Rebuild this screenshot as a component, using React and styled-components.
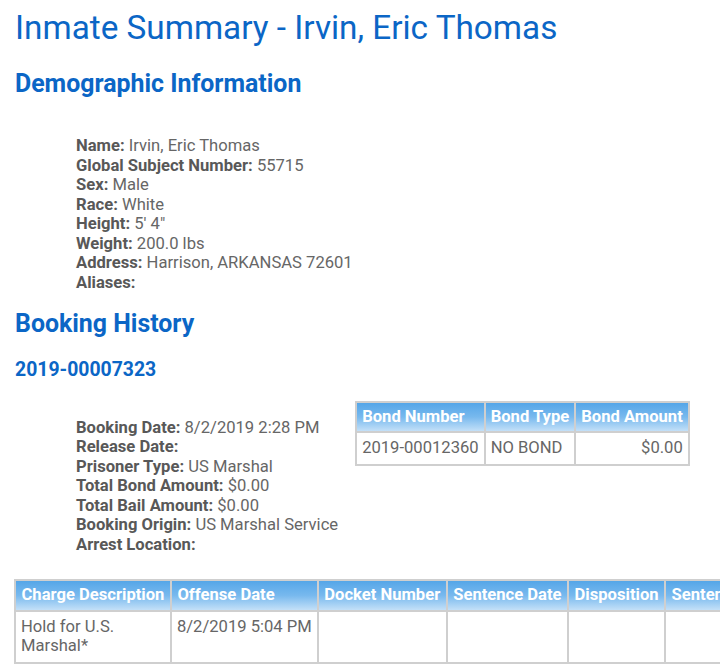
import React from 'react'
import styled, { createGlobalStyle } from 'styled-components'

const demographics = [
  ['Name', 'Irvin, Eric Thomas'],
  ['Global Subject Number', '55715'],
  ['Sex', 'Male'],
  ['Race', 'White'],
  ['Height', '5\' 4"'],
  ['Weight', '200.0 lbs'],
  ['Address', 'Harrison, ARKANSAS 72601'],
  ['Aliases', '']
]

const booking = {
  number: '2019-00007323',
  details: [
    ['Booking Date', '8/2/2019 2:28 PM'],
    ['Release Date', ''],
    ['Prisoner Type', 'US Marshal'],
    ['Total Bond Amount', '$0.00'],
    ['Total Bail Amount', '$0.00'],
    ['Booking Origin', 'US Marshal Service'],
    ['Arrest Location', '']
  ],
  bonds: [{ number: '2019-00012360', type: 'NO BOND', amount: '$0.00' }],
  charges: [{ description: 'Hold for U.S. Marshal*', offenseDate: '8/2/2019 5:04 PM' }]
}

const chargeColumns = ['Charge Description', 'Offense Date', 'Docket Number', 'Sentence Date', 'Disposition', 'Sentence Length']

const GlobalStyle = createGlobalStyle`
  html, body {
    overflow: hidden;
  }
  body {
    margin: 0;
    background: #fff;
    font-family: Roboto, "Liberation Sans", Arial, sans-serif;
    color: #666;
  }
`

const Page = styled.div`
  padding: 7px 0 0 15px;
`

const Title = styled.h1`
  margin: 0;
  font-size: 33.3px;
  font-weight: 400;
  line-height: 42px;
  color: #0b66c6;
`

const SectionTitle = styled.h2`
  margin: ${({ first }) => (first ? '20px' : '16px')} 0 0;
  font-size: 24.9px;
  font-weight: 700;
  line-height: 30px;
  color: #0b66c6;
`

const BookingNumber = styled.h3`
  margin: 19px 0 0;
  font-size: 19.4px;
  font-weight: 700;
  line-height: 24px;
  color: #0b66c6;
`

const Details = styled.div`
  padding-left: 61px;
  margin-top: ${({ offset }) => offset}px;
  font-size: 16.6px;
  line-height: 19.57px;
  white-space: nowrap;
`

const Label = styled.b`
  color: #585858;
`

const BookingRow = styled.div`
  display: flex;
  align-items: flex-start;
  gap: 17px;
  margin-top: 19px;
`

const Grid = styled.table`
  border-collapse: separate;
  border-spacing: 2px;
  background: #cfcfcf;
  font-size: 16.6px;
  line-height: 19.5px;
  flex-shrink: 0;
  margin-left: ${({ indent }) => indent || 0}px;
  margin-top: ${({ top }) => top || 0}px;
`

const Head = styled.th`
  padding: 4px ${({ roomy }) => (roomy ? '5.5px' : '5px')} 5px;
  text-align: left;
  font-weight: 700;
  color: #fff;
  white-space: nowrap;
  background: linear-gradient(to bottom, #55a6e8 0%, #78b9ee 50%, #c3e0f8 100%);
`

const Cell = styled.td`
  padding: 5px 5px 6px;
  background: #fff;
  vertical-align: top;
  text-align: ${({ right }) => (right ? 'right' : 'left')};
  white-space: ${({ wrap }) => (wrap ? 'normal' : 'nowrap')};
  width: ${({ narrow }) => (narrow ? '1px' : 'auto')};
`

const Field = ({ label, value }) => (
  <div>
    <Label>{label}:</Label> {value}
  </div>
)

const BondTable = ({ bonds }) => (
  <Grid>
    <thead>
      <tr>
        <Head>Bond Number</Head>
        <Head>Bond Type</Head>
        <Head>Bond Amount</Head>
      </tr>
    </thead>
    <tbody>
      {bonds.map((bond) => (
        <tr key={bond.number}>
          <Cell>{bond.number}</Cell>
          <Cell>{bond.type}</Cell>
          <Cell right>{bond.amount}</Cell>
        </tr>
      ))}
    </tbody>
  </Grid>
)

const ChargeTable = ({ charges }) => (
  <Grid indent={-1} top={25}>
    <thead>
      <tr>
        {chargeColumns.map((col) => <Head roomy key={col}>{col}</Head>)}
      </tr>
    </thead>
    <tbody>
      {charges.map((charge) => (
        <tr key={charge.description}>
          <Cell wrap='true' narrow>{charge.description}</Cell>
          <Cell>{charge.offenseDate}</Cell>
          <Cell />
          <Cell />
          <Cell />
          <Cell />
        </tr>
      ))}
    </tbody>
  </Grid>
)

const App = () => (
  <>
    <GlobalStyle />
    <Page>
      <Title>Inmate Summary - Irvin, Eric Thomas</Title>

      <SectionTitle first>Demographic Information</SectionTitle>
      <Details offset={37}>
        {demographics.map(([label, value]) => (
          <Field key={label} label={label} value={value} />
        ))}
      </Details>

      <SectionTitle>Booking History</SectionTitle>
      <BookingNumber>{booking.number}</BookingNumber>
      <BookingRow>
        <Details offset={17}>
          {booking.details.map(([label, value]) => (
            <Field key={label} label={label} value={value} />
          ))}
        </Details>
        <BondTable bonds={booking.bonds} />
      </BookingRow>
      <ChargeTable charges={booking.charges} />
    </Page>
  </>
)

export default App
